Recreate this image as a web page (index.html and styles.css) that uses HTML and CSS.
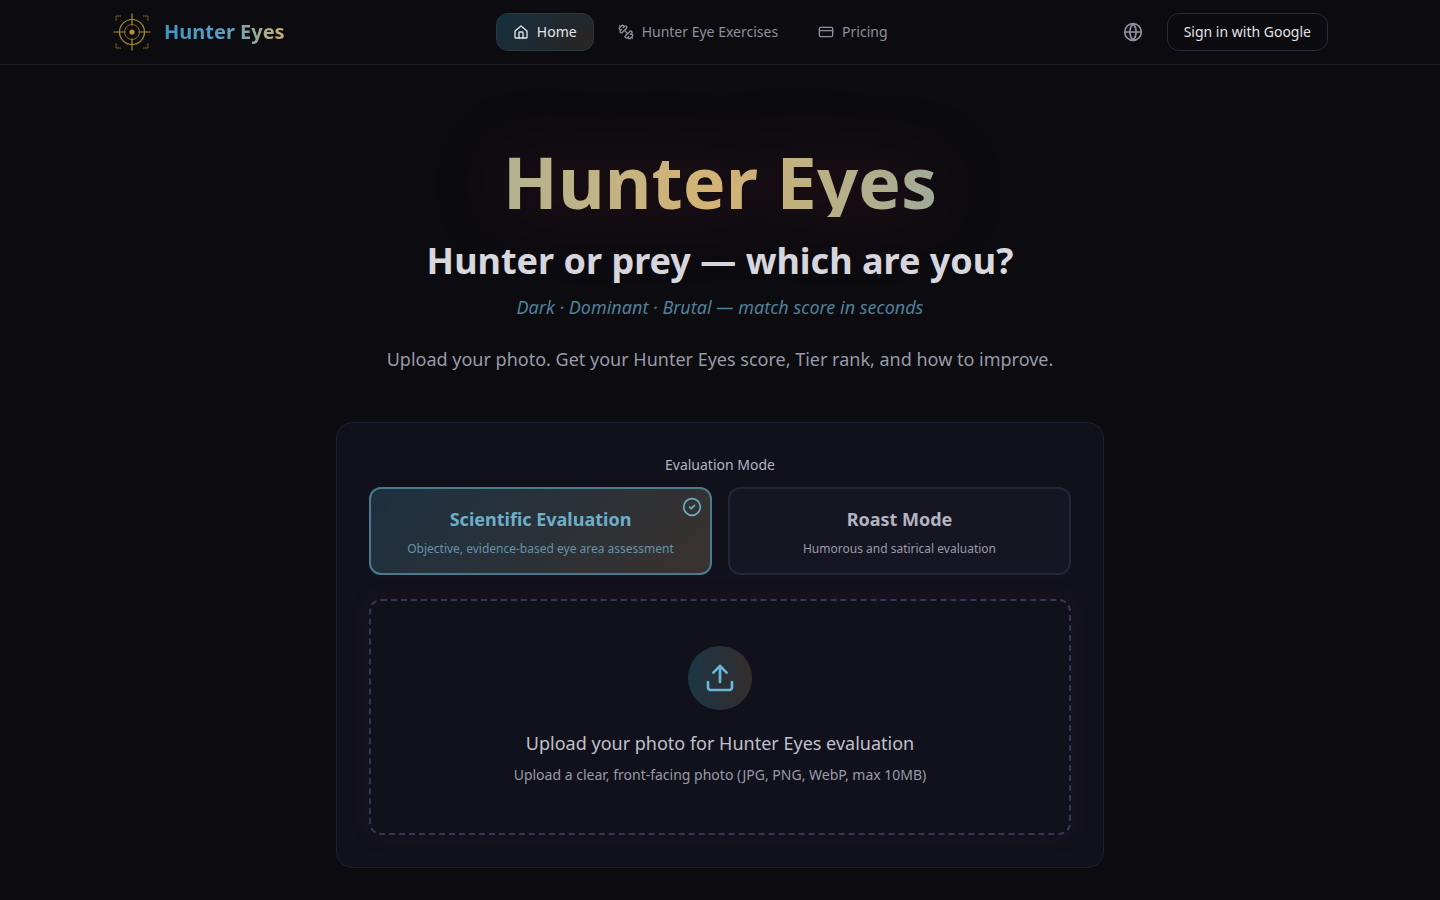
FILE: index.html
```html
<!DOCTYPE html>
<html lang="en">
<head>
    <meta charset="UTF-8">
    <meta name="viewport" content="width=device-width, initial-scale=1.0">
    <title>Hunter Eyes</title>
    <link rel="stylesheet" href="styles.css">
</head>
<body>
    <header class="topbar">
        <div class="topbar-inner">
            <a class="brand" href="#">
                <svg class="brand-logo" viewBox="0 0 40 40" fill="none" stroke="#a88f2c">
                    <path d="M4 9V4h5M31 4h5v5M36 31v5h-5M9 36H4v-5" stroke="#7d6128"/>
                    <circle cx="20" cy="20" r="12.5" stroke-width="1.2"/>
                    <circle cx="20" cy="20" r="7.5" stroke-width="1" stroke="#7f6724"/>
                    <circle cx="20" cy="20" r="2.6" fill="#b88f28" stroke="none"/>
                    <path d="M20 1.500v12M20 26.500v12M1.500 20h12M26.500 20h12" stroke-width="1.200"/>
                </svg>
                <span class="brand-name">Hunter Eyes</span>
            </a>
            <nav class="nav">
                <a class="nav-link active" href="#">
                    <svg class="nav-icon" viewBox="0 0 24 24"><path d="M3 10.500 12 3l9 7.500V20a1 1 0 0 1-1 1H4a1 1 0 0 1-1-1z"/><path d="M9 21v-8a1 1 0 0 1 1-1h4a1 1 0 0 1 1 1v8"/></svg>
                    Home
                </a>
                <a class="nav-link" href="#">
                    <svg class="nav-icon" viewBox="0 0 24 24"><g transform="matrix(-1 0 0 1 24 0)"><path d="M17.596 12.768a2 2 0 1 0 2.829-2.829l-1.768-1.767a2 2 0 0 0 2.828-2.829l-2.828-2.828a2 2 0 0 0-2.829 2.828l-1.767-1.768a2 2 0 1 0-2.829 2.829z"/><path d="m2.500 21.500 1.400-1.400"/><path d="m20.100 3.900 1.400-1.400"/><path d="M5.343 21.485a2 2 0 1 0 2.829-2.828l1.767 1.768a2 2 0 1 0 2.829-2.829l-6.364-6.364a2 2 0 1 0-2.829 2.829l1.768 1.767a2 2 0 0 0-2.828 2.829z"/><path d="m9.600 14.400 4.800-4.800"/></g></svg>
                    Hunter Eye Exercises
                </a>
                <a class="nav-link" href="#">
                    <svg class="nav-icon" viewBox="0 0 24 24"><rect x="2" y="5" width="20" height="14" rx="2"/><path d="M2 10h20"/></svg>
                    Pricing
                </a>
            </nav>
            <div class="actions">
                <button class="lang-btn" aria-label="Language">
                    <svg viewBox="0 0 24 24"><circle cx="12" cy="12" r="10"/><path d="M2 12h20"/><path d="M12 2a15 15 0 0 1 0 20 15 15 0 0 1 0-20"/></svg>
                </button>
                <button class="signin">Sign in with Google</button>
            </div>
        </div>
    </header>

    <main class="main">
        <section class="hero">
            <h1>Hunter Eyes</h1>
            <h2>Hunter or prey — which are you?</h2>
            <p class="tagline">Dark · Dominant · Brutal — match score in seconds</p>
            <p class="lead">Upload your photo. Get your Hunter Eyes score, Tier rank, and how to improve.</p>
        </section>

        <section class="card">
            <div class="mode-label">Evaluation Mode</div>
            <div class="modes">
                <button class="mode selected">
                    <svg class="mode-check" viewBox="0 0 24 24"><circle cx="12" cy="12" r="10"/><path d="m9 12 2 2 4-4"/></svg>
                    <span class="mode-title">Scientific Evaluation</span>
                    <span class="mode-desc">Objective, evidence-based eye area assessment</span>
                </button>
                <button class="mode">
                    <span class="mode-title">Roast Mode</span>
                    <span class="mode-desc">Humorous and satirical evaluation</span>
                </button>
            </div>
            <div class="dropzone">
                <div class="upload-circle">
                    <svg viewBox="0 0 24 24"><path d="M12 15V3"/><path d="m7 8 5-5 5 5"/><path d="M3 15v4a2 2 0 0 0 2 2h14a2 2 0 0 0 2-2v-4"/></svg>
                </div>
                <div class="drop-title">Upload your photo for Hunter Eyes evaluation</div>
                <div class="drop-hint">Upload a clear, front-facing photo (JPG, PNG, WebP, max 10MB)</div>
            </div>
        </section>
    </main>
</body>
</html>
```

FILE: styles.css
```css
* {
    box-sizing: border-box;
}
body {
    margin: 0;
    height: 900px;
    overflow: hidden;
    background: #0b0b10;
    color: #e4e4e7;
    font-family: "Noto Sans", sans-serif;
}
a {
    color: inherit;
    text-decoration: none;
}
button {
    font-family: inherit;
    cursor: pointer;
}

.topbar {
    height: 65px;
    border-bottom: 1px solid #1e1e26;
}
.topbar-inner {
    max-width: 1216px;
    height: 64px;
    margin: 0 auto;
    display: flex;
    justify-content: space-between;
    align-items: center;
}
.brand {
    display: flex;
    align-items: center;
    gap: 12px;
}
.brand-logo {
    width: 40px;
    height: 40px;
}
.brand-name {
    margin-bottom: 2px;
    font-size: 20px;
    font-weight: 700;
    background: linear-gradient(90deg, #3f97c4 0%, #5a9fc0 50%, #d4b373 100%);
    -webkit-background-clip: text;
    background-clip: text;
    color: transparent;
}
.nav {
    display: flex;
    gap: 8px;
}
.nav-link {
    display: flex;
    align-items: center;
    gap: 8px;
    height: 38px;
    padding: 0 16px 2px;
    border-radius: 12px;
    font-size: 14px;
    color: #8f8f9d;
}
.nav-link.active {
    color: #e4e4e7;
    background: linear-gradient(135deg, #14303f, #2a2421);
    border: 1px solid #2a3a44;
}
.nav-icon {
    width: 16px;
    height: 16px;
    margin-top: 2px;
    fill: none;
    stroke: currentColor;
    stroke-width: 2;
    stroke-linecap: round;
    stroke-linejoin: round;
}
.actions {
    display: flex;
    align-items: center;
    gap: 16px;
}
.lang-btn {
    width: 36px;
    height: 36px;
    padding: 8px;
    background: none;
    border: none;
    color: #8f8f9d;
}
.lang-btn svg {
    display: block;
    width: 20px;
    height: 20px;
    fill: none;
    stroke: currentColor;
    stroke-width: 2;
}
.signin {
    height: 38px;
    padding: 0 16px 2px;
    background: #0a0a0f;
    border: 1px solid #2a2a3c;
    border-radius: 12px;
    color: #e4e4e7;
    font-size: 14px;
}

.main {
    display: flex;
    flex-direction: column;
    align-items: center;
}
.hero {
    margin-top: 80px;
    text-align: center;
}
.hero h1 {
    width: fit-content;
    margin: 0 auto;
    font-size: 72px;
    line-height: 72px;
    font-weight: 700;
    background: linear-gradient(90deg, #b3b391 0%, #d4b373 50%, #a0ab98 100%);
    -webkit-background-clip: text;
    background-clip: text;
    color: transparent;
    filter: drop-shadow(0 0 36px rgba(130, 30, 50, 0.42));
}
.hero h2 {
    margin: 24px 0 0;
    font-size: 36px;
    line-height: 40px;
    font-weight: 700;
    color: #d8d8df;
}
.tagline {
    margin: 12px 0 0;
    font-size: 18px;
    line-height: 28px;
    font-style: italic;
    color: #4f8199;
}
.lead {
    margin: 24px 0 0;
    font-size: 18px;
    line-height: 28px;
    color: #9a9aa8;
}

.card {
    width: 768px;
    height: 446px;
    margin-top: 49px;
    padding: 32px;
    background: #11111b;
    border: 1px solid #1e2030;
    border-radius: 16px;
}
.mode-label {
    font-size: 14px;
    line-height: 20px;
    text-align: center;
    color: #b4b4c0;
}
.modes {
    display: grid;
    grid-template-columns: 1fr 1fr;
    gap: 16px;
    margin-top: 12px;
}
.mode {
    position: relative;
    height: 88px;
    display: flex;
    flex-direction: column;
    align-items: center;
    justify-content: center;
    gap: 8px;
    background: #161622;
    border: 2px solid #252538;
    border-radius: 12px;
    color: #b4b4c0;
}
.mode.selected {
    background: linear-gradient(135deg, #1c3040, #3a322f);
    border-color: #4a7a90;
    color: #6cafc9;
}
.mode-check {
    position: absolute;
    top: 8px;
    right: 8px;
    width: 20px;
    height: 20px;
    fill: none;
    stroke: currentColor;
    stroke-width: 2;
    stroke-linecap: round;
    stroke-linejoin: round;
}
.mode-title {
    font-size: 18px;
    line-height: 28px;
    font-weight: 700;
}
.mode-desc {
    font-size: 12px;
    line-height: 16px;
    color: #9a9aa8;
}
.mode.selected .mode-desc {
    color: #6493a9;
}
.dropzone {
    height: 236px;
    margin-top: 24px;
    display: flex;
    flex-direction: column;
    align-items: center;
    padding-top: 45px;
    border: 2px dashed #383552;
    border-radius: 12px;
    box-shadow: 0 0 20px rgba(90, 30, 90, 0.16);
}
.upload-circle {
    width: 64px;
    height: 64px;
    display: flex;
    align-items: center;
    justify-content: center;
    border-radius: 50%;
    background: linear-gradient(90deg, #1c3646, #342c2b);
    color: #6ab4d8;
}
.upload-circle svg {
    width: 32px;
    height: 32px;
    fill: none;
    stroke: currentColor;
    stroke-width: 2;
    stroke-linecap: round;
    stroke-linejoin: round;
}
.drop-title {
    margin-top: 19px;
    font-size: 18px;
    line-height: 28px;
    color: #c0c0cc;
}
.drop-hint {
    margin-top: 8px;
    font-size: 14px;
    line-height: 20px;
    color: #9a9aa8;
}
```
